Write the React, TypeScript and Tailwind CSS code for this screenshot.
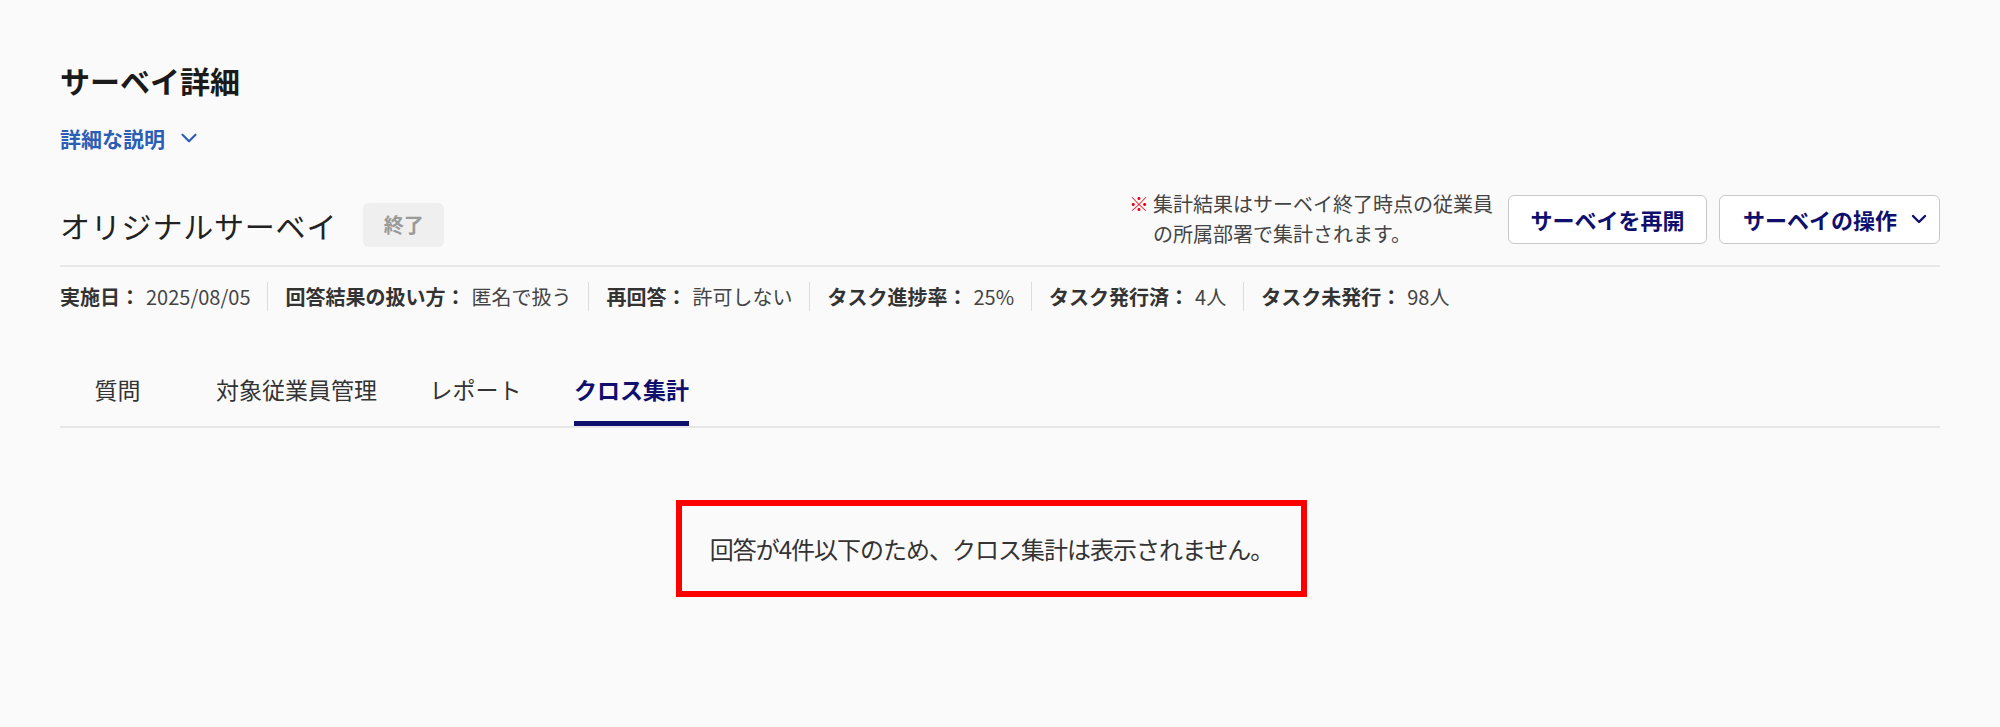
import { ChevronDown } from 'lucide-react'

const meta = [
  { label: '実施日：', value: '2025/08/05' },
  { label: '回答結果の扱い方：', value: '匿名で扱う' },
  { label: '再回答：', value: '許可しない' },
  { label: 'タスク進捗率：', value: '25%' },
  { label: 'タスク発行済：', value: '4人' },
  { label: 'タスク未発行：', value: '98人' },
]

const tabs = ['質問', '対象従業員管理', 'レポート', 'クロス集計']

const App: React.FC = () => {
  return (
    <div
      className="min-h-[727px] w-full bg-[#fafafa] px-[60px] pt-[58px] text-[#333]"
      style={{ fontFamily: '"Noto Sans CJK JP", "Noto Sans", sans-serif' }}
    >
      <h1 className="text-[30px] leading-[45px] font-bold text-[#1a1a1a]">サーベイ詳細</h1>
      <button className="mt-[20px] flex items-center gap-[11px] text-[21px] leading-[30px] font-bold text-[#2d5eb5]">
        詳細な説明
        <ChevronDown className="h-[26px] w-[26px]" strokeWidth={2} />
      </button>

      <div className="mt-[36px] flex items-center justify-between">
        <div className="flex items-center gap-[26px] pt-[12px]">
          <h2 className="text-[30px] leading-[40px] tracking-[0.8px] text-[#222]">オリジナルサーベイ</h2>
          <span className="flex h-[44px] w-[81px] items-center justify-center rounded-[6px] bg-[#efefef] text-[20px] font-bold text-[#9a9a9a]">
            終了
          </span>
        </div>
        <div className="flex items-center">
          <div className="mr-[15px] flex text-[20px] leading-[30px] text-[#444]">
            <span className="mr-[4px] text-[#e60012]">※</span>
            <p className="whitespace-nowrap">
              集計結果はサーベイ終了時点の従業員
              <br />
              の所属部署で集計されます。
            </p>
          </div>
          <button className="h-[49px] w-[199px] rounded-[6px] border border-[#c9c9c9] bg-white text-[22px] font-bold text-[#0f0f6e]">
            サーベイを再開
          </button>
          <button className="ml-[12px] flex h-[49px] w-[221px] items-center rounded-[6px] border border-[#c9c9c9] bg-white pl-[23px] text-[22px] font-bold text-[#0f0f6e]">
            サーベイの操作
            <ChevronDown className="ml-[10px] h-[24px] w-[24px]" strokeWidth={2.4} />
          </button>
        </div>
      </div>

      <div className="mt-[16px] h-[2px] bg-[#e8e8e8]" />

      <div className="mt-[15px] flex text-[20px] leading-[29px]">
        {meta.map((m, i) => (
          <div
            key={m.label}
            className={
              i === 0
                ? 'flex pr-[17px]'
                : 'flex border-l border-[#dcdcdc] px-[17px]'
            }
          >
            <span className="font-bold text-[#333]">{m.label}</span>
            <span className="ml-[6px] text-[#444]">{m.value}</span>
          </div>
        ))}
      </div>

      <ul className="mt-[61px] flex gap-[52px] border-b-2 border-[#e6e6e6] pl-[11px]">
        {tabs.map((t, i) => (
          <li
            key={t}
            className={
              i === tabs.length - 1
                ? 'min-w-[93px] border-b-[5px] border-[#0f0f6e] pb-[15px] text-center text-[23px] leading-[34px] font-bold text-[#0f0f6e]'
                : 'min-w-[93px] border-b-[5px] border-transparent pb-[15px] text-center text-[23px] leading-[34px] text-[#333]'
            }
          >
            {t}
          </li>
        ))}
      </ul>

      <div className="mt-[72px] ml-[616px] flex h-[97px] w-[631px] items-center justify-center border-[6px] border-[#ff0000]">
        <p className="text-[24px] leading-[36px] tracking-[-1px] text-[#333]">
          回答が4件以下のため、クロス集計は表示されません。
        </p>
      </div>
    </div>
  )
}

export default App
